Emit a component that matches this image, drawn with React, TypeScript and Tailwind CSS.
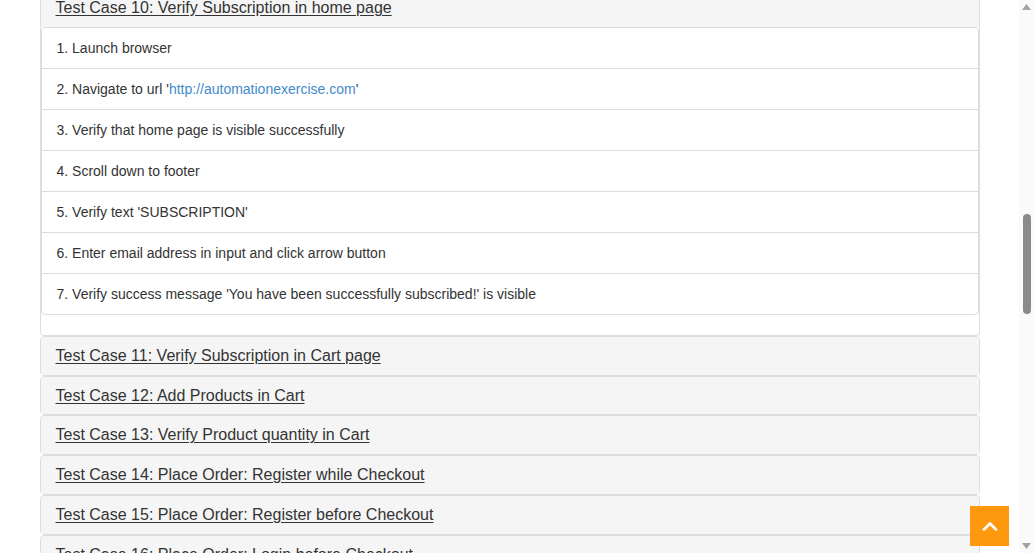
import React from "react";

const steps: React.ReactNode[] = [
  "1. Launch browser",
  <>
    2. Navigate to url '
    <a className="text-[#428bca]" href="#">
      http://automationexercise.com
    </a>
    '
  </>,
  "3. Verify that home page is visible successfully",
  "4. Scroll down to footer",
  "5. Verify text 'SUBSCRIPTION'",
  "6. Enter email address in input and click arrow button",
  "7. Verify success message 'You have been successfully subscribed!' is visible",
];

const collapsed = [
  "Test Case 11: Verify Subscription in Cart page",
  "Test Case 12: Add Products in Cart",
  "Test Case 13: Verify Product quantity in Cart",
  "Test Case 14: Place Order: Register while Checkout",
  "Test Case 15: Place Order: Register before Checkout",
  "Test Case 16: Place Order: Login before Checkout",
];

function Heading({ title }: { title: string }) {
  return (
    <div className="bg-[#f5f5f5] px-[15px] py-[10px] rounded-t-[3px] text-[16px] leading-[17.8px]">
      <a href="#" className="text-[#333] underline underline-offset-[2px]">
        {title}
      </a>
    </div>
  );
}

export default function App() {
  return (
    <div
      className="flex h-[553px] w-[1034px] overflow-hidden bg-white text-[#333]"
      style={{ fontFamily: '"Liberation Sans", Arial, sans-serif' }}
    >
      <div className="relative w-[1019px] shrink-0">
        <div className="mx-auto w-[970px] px-[15px]">
          <div className="-mt-[12px] flex flex-col">
            <div className="rounded-[4px] border border-[#ddd] bg-white">
              <Heading title="Test Case 10: Verify Subscription in home page" />
              <ul className="mb-[20px] rounded-[4px] border border-[#ddd]">
                {steps.map((s, i) => (
                  <li
                    key={i}
                    className={`px-[15px] py-[10px] text-[14px] leading-[20px] ${
                      i > 0 ? "border-t border-[#ddd]" : ""
                    }`}
                  >
                    {s}
                  </li>
                ))}
              </ul>
            </div>
            {collapsed.map((t) => (
              <div key={t} className="rounded-[4px] border border-[#ddd] bg-[#f5f5f5]">
                <Heading title={t} />
              </div>
            ))}
          </div>
        </div>
        <button className="absolute right-[10px] bottom-[7px] flex h-[40px] w-[39px] items-center justify-center bg-[#FE980F]">
          <svg width="16" height="10" viewBox="0 0 16 10" fill="none">
            <polyline
              points="2,8.5 8,2.5 14,8.5"
              stroke="white"
              strokeWidth="2.6"
              strokeLinecap="round"
              strokeLinejoin="round"
            />
          </svg>
        </button>
      </div>
      <div className="flex w-[15px] shrink-0 flex-col items-center bg-[#fafafa]">
        <svg className="mt-[4px]" width="9" height="6" viewBox="0 0 9 6">
          <polygon points="4.5,0 9,6 0,6" fill="#a3a3a3" />
        </svg>
        <div className="mt-[204px] h-[100px] w-[8px] rounded-full bg-[#8a8a8a]" />
        <div className="flex-1" />
        <svg className="mb-[4px]" width="9" height="6" viewBox="0 0 9 6">
          <polygon points="0,0 9,0 4.5,6" fill="#a3a3a3" />
        </svg>
      </div>
    </div>
  );
}
